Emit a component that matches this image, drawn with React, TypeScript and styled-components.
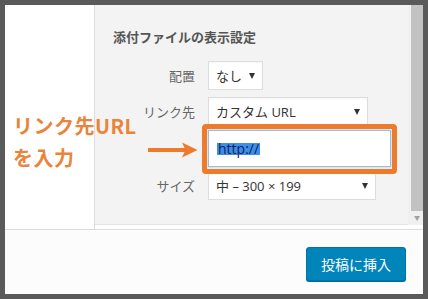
import styled, { createGlobalStyle } from 'styled-components';

const GlobalStyle = createGlobalStyle`
  html, body {
    margin: 0;
    padding: 0;
    background: #5a5a5a;
  }
  * {
    box-sizing: border-box;
  }
`;

const jpFont = `"Open Sans", "Noto Sans CJK JP", sans-serif`;

const SelectArrow = () => <Caret />;

const App = () => {
  return (
    <>
      <GlobalStyle />
      <Frame>
        <Window>
          <Main>
            <LeftPane />
            <Sidebar>
              <Title>添付ファイルの表示設定</Title>
              <Settings>
                <Row $extra={3}>
                  <Label>配置</Label>
                  <Select $w={55}>
                    <span>なし</span>
                    <SelectArrow />
                  </Select>
                </Row>
                <Row>
                  <Label>リンク先</Label>
                  <Select $w={160}>
                    <span>カスタム URL</span>
                    <SelectArrow />
                  </Select>
                </Row>
                <Row>
                  <Label />
                  <InputWrap>
                    <UrlInput>
                      <Selected>http://</Selected>
                    </UrlInput>
                    <Highlight />
                  </InputWrap>
                </Row>
                <Row>
                  <Label>サイズ</Label>
                  <Select $w={168}>
                    <span>中 – 300 × 199</span>
                    <SelectArrow />
                  </Select>
                </Row>
              </Settings>
            </Sidebar>
            <Scrollbar>
              <Thumb />
              <ScrollDown>▼</ScrollDown>
            </Scrollbar>
          </Main>
          <Footer>
            <InsertButton>投稿に挿入</InsertButton>
          </Footer>

          <Note>
            リンク先URL
            <br />
            を入力
          </Note>
          <Arrow viewBox="0 0 50 16" width="50" height="16">
            <rect x="0" y="6" width="40" height="4" fill="#ee7a2c" />
            <path d="M34 0.5 L49.5 8 L34 15.5 L37.5 8 Z" fill="#ee7a2c" />
          </Arrow>
        </Window>
      </Frame>
    </>
  );
};

const Frame = styled.div`
  width: 428px;
  height: 299px;
  padding: 5px 5px 5px 5px;
  background: #5a5a5a;
`;

const Window = styled.div`
  position: relative;
  width: 418px;
  height: 289px;
  background: #fcfcfc;
  display: flex;
  flex-direction: column;
  font-family: ${jpFont};
`;

const Main = styled.div`
  height: 225px;
  display: flex;
  flex-direction: row;
  align-items: flex-start;
  background: #fff;
  border-bottom: 1px solid #dcdcdc;
`;

const LeftPane = styled.div`
  width: 90px;
  align-self: stretch;
  background: #fff;
  border-right: 1px solid #dedede;
`;

const Sidebar = styled.div`
  width: 313px;
  height: 220px;
  background: #f3f3f3;
  border-bottom: 1px solid #e4e4e4;
  padding: 22px 0 0 18px;
`;

const Title = styled.div`
  font-size: 13px;
  line-height: 20px;
  font-weight: 600;
  color: #555;
  margin-bottom: 14px;
`;

const Settings = styled.div`
  display: flex;
  flex-direction: column;
  gap: 4px;
`;

const Row = styled.div<{ $extra?: number }>`
  display: flex;
  flex-direction: row;
  align-items: center;
  gap: 13px;
  margin-bottom: ${(p) => p.$extra || 0}px;
`;

const Label = styled.div`
  width: 82px;
  text-align: right;
  font-size: 13px;
  color: #666;
`;

const Select = styled.div<{ $w: number }>`
  width: ${(p) => p.$w}px;
  height: 29px;
  background: #fff;
  border: 1px solid #ddd;
  box-shadow: inset 0 1px 2px rgba(0, 0, 0, 0.04);
  display: flex;
  align-items: center;
  justify-content: space-between;
  padding: 0 7px 0 7px;
  font-size: 13px;
  color: #333;
`;

const Caret = styled.span`
  width: 0;
  height: 0;
  border-left: 3.5px solid transparent;
  border-right: 3.5px solid transparent;
  border-top: 6px solid #333;
  margin-top: 1px;
`;

const InputWrap = styled.div`
  position: relative;
  width: 183px;
  height: 37px;
`;

const UrlInput = styled.div`
  width: 100%;
  height: 100%;
  background: #fff;
  border: 1px solid #9dbcdb;
  box-shadow: 0 0 2px rgba(30, 140, 190, 0.35);
  display: flex;
  align-items: center;
  padding: 0 8px;
  font-size: 14px;
`;

const Selected = styled.span`
  background: #3d8ee6;
  color: #10235e;
  line-height: 12px;
  padding: 0 1px;
`;

const Highlight = styled.div`
  position: absolute;
  left: -6px;
  right: -6px;
  top: -6px;
  bottom: -7px;
  border: 5px solid #ee7a2c;
  border-radius: 4px;
  pointer-events: none;
`;

const Scrollbar = styled.div`
  width: 15px;
  height: 220px;
  background: #f0f0f0;
  display: flex;
  flex-direction: column;
  align-items: flex-end;
`;

const Thumb = styled.div`
  width: 12px;
  height: 206px;
  background: #c2c2c2;
`;

const ScrollDown = styled.div`
  width: 12px;
  text-align: center;
  font-size: 6px;
  line-height: 14px;
  color: #a0a0a0;
`;

const Footer = styled.div`
  flex: 1;
  display: flex;
  justify-content: flex-end;
  align-items: flex-start;
  padding: 17px 17px 0 0;
  background: #fcfcfc;
`;

const InsertButton = styled.div`
  width: 100px;
  height: 34px;
  background: #0085ba;
  border: 1px solid #0073aa;
  border-radius: 3px;
  box-shadow: 0 1px 0 #006799;
  color: #fff;
  font-size: 14px;
  display: flex;
  align-items: center;
  justify-content: center;
`;

const Note = styled.div`
  position: absolute;
  left: 8px;
  top: 105px;
  font-family: "Noto Sans CJK JP", sans-serif;
  font-weight: 700;
  font-size: 20px;
  line-height: 32px;
  letter-spacing: 0.5px;
  color: #e9843a;
`;

const Arrow = styled.svg`
  position: absolute;
  left: 143px;
  top: 137px;
`;

export default App;
